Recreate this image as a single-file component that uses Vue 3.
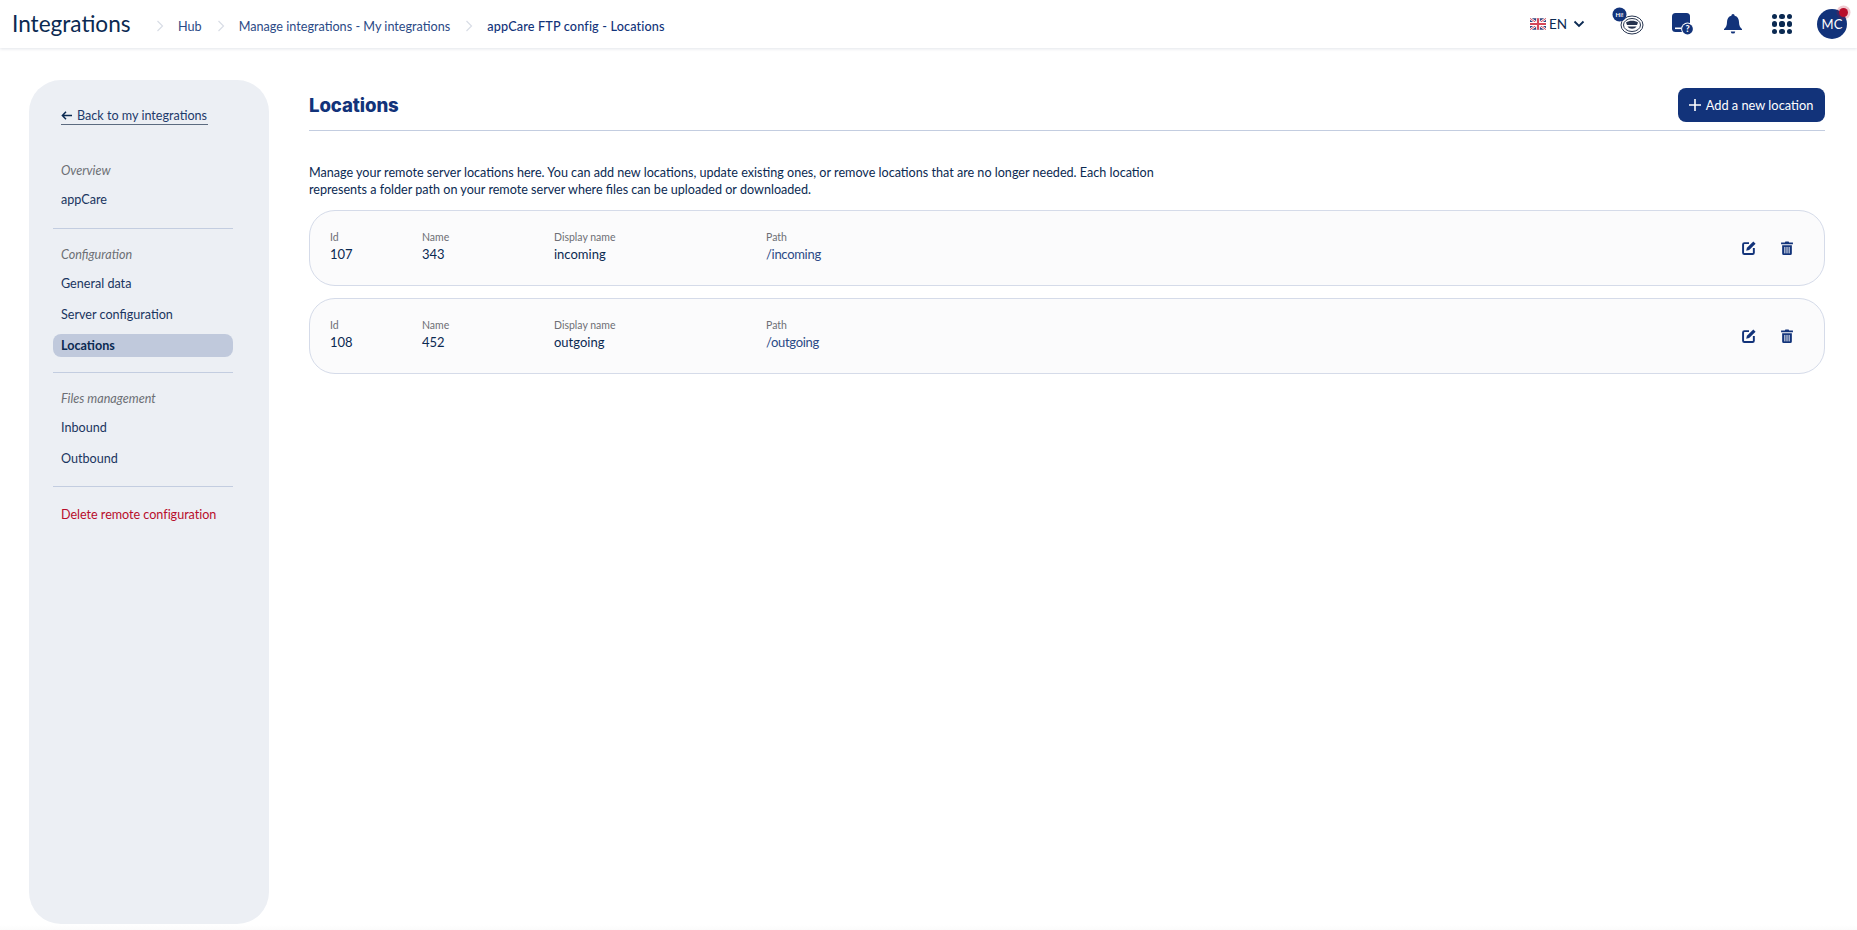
<script setup>
const crumbs = ['Hub', 'Manage integrations - My integrations', 'appCare FTP config - Locations']
const rows = [
  { id: 107, name: 343, display: 'incoming', path: '/incoming' },
  { id: 108, name: 452, display: 'outgoing', path: '/outgoing' }
]
</script>

<template>
  <div class="app">
    <header class="topbar">
      <div class="brand">Integrations</div>
      <nav class="crumbs">
        <template v-for="(c, i) in crumbs" :key="c">
          <svg class="sep" width="8" height="12" viewBox="0 0 8 12"><path d="M1.5 1l5 5-5 5" fill="none" stroke="#d9dde6" stroke-width="1.2"/></svg>
          <span class="crumb" :class="{ last: i === crumbs.length - 1 }">{{ c }}</span>
        </template>
      </nav>
      <div class="tools">
        <div class="lang">
          <svg width="16" height="12" viewBox="0 0 17 12" class="flag">
            <rect width="17" height="12" rx="2" fill="#33467f"/>
            <path d="M0 0l17 12M17 0L0 12" stroke="#fff" stroke-width="2.6"/>
            <path d="M0 0l17 12M17 0L0 12" stroke="#d4475a" stroke-width="1"/>
            <path d="M8.5 0v12M0 6h17" stroke="#fff" stroke-width="4"/>
            <path d="M8.5 0v12M0 6h17" stroke="#d4475a" stroke-width="2.2"/>
          </svg>
          <span>EN</span>
          <svg class="chev" width="12" height="8" viewBox="0 0 12 8"><path d="M1.5 1.5L6 6l4.5-4.5" fill="none" stroke="#0b2a52" stroke-width="1.8"/></svg>
        </div>
        <svg class="hi" width="32" height="28" viewBox="0 0 32 28">
          <ellipse cx="20" cy="18" rx="11" ry="9" fill="#fff" stroke="#26344f" stroke-width="1"/>
          <ellipse cx="20" cy="18" rx="8.5" ry="6.5" fill="none" stroke="#26344f" stroke-width="1"/>
          <path d="M14 15.5c3-2.5 9-2.5 12 0l-1 2.5H15z" fill="#26344f"/>
          <path d="M15.5 19.5c2 3 7 3 9 0z" fill="#26344f"/>
          <circle cx="7.5" cy="7.5" r="7" fill="#12337a"/>
          <text x="7.5" y="9.6" text-anchor="middle" class="hi-text">Hi!</text>
        </svg>
        <svg class="help" width="22" height="22" viewBox="0 0 22 22">
          <rect x="0" y="0" width="18" height="19" rx="3.5" fill="#12337a"/>
          <rect x="3" y="14.5" width="6" height="1.6" fill="#fff"/>
          <circle cx="15.5" cy="16" r="6.4" fill="#fff"/>
          <circle cx="15.5" cy="16" r="5.4" fill="#12337a"/>
          <text x="15.5" y="19.2" text-anchor="middle" class="q-text">?</text>
        </svg>
        <svg class="bell" width="18" height="20" viewBox="0 0 18 20">
          <path d="M9 0a1.6 1.6 0 0 1 1.6 1.7C13.6 2.4 15 5 15 8c0 3.6 1 5.3 3 7v1H0v-1c2-1.7 3-3.4 3-7 0-3 1.4-5.6 4.4-6.3A1.6 1.6 0 0 1 9 0z" fill="#12337a"/>
          <path d="M6.8 17.4h4.4a2.2 2.2 0 0 1-4.4 0z" fill="#12337a"/>
        </svg>
        <div class="grid-icon"><i v-for="n in 9" :key="n"></i></div>
        <div class="avatar">MC<span class="dot"></span></div>
      </div>
    </header>

    <div class="body">
      <aside class="side">
        <a class="back">
          <svg class="arrow" width="11" height="9" viewBox="0 0 11 9"><path d="M5 .8L1.4 4.5 5 8.2M1.4 4.5H11" fill="none" stroke="#0b2a52" stroke-width="1.5"/></svg>
          Back to my integrations
        </a>
        <div class="group first">
          <div class="title">Overview</div>
          <div class="item one">appCare</div>
        </div>
        <hr />
        <div class="group">
          <div class="title">Configuration</div>
          <div class="item">General data</div>
          <div class="item">Server configuration</div>
          <div class="item active">Locations</div>
        </div>
        <hr />
        <div class="group">
          <div class="title">Files management</div>
          <div class="item">Inbound</div>
          <div class="item">Outbound</div>
        </div>
        <hr />
        <div class="item danger">Delete remote configuration</div>
      </aside>

      <main class="main">
        <div class="head">
          <h1>Locations</h1>
          <button class="add">
            <svg width="12" height="12" viewBox="0 0 12 12"><path d="M6 0v12M0 6h12" stroke="#fff" stroke-width="1.6"/></svg>
            Add a new location
          </button>
        </div>
        <p class="intro">Manage your remote server locations here. You can add new locations, update existing ones, or remove locations that are no longer needed. Each location represents a folder path on your remote server where files can be uploaded or downloaded.</p>
        <div class="list">
          <div v-for="r in rows" :key="r.id" class="card">
            <div class="col c1"><label>Id</label><b>{{ r.id }}</b></div>
            <div class="col c2"><label>Name</label><b>{{ r.name }}</b></div>
            <div class="col c3"><label>Display name</label><b>{{ r.display }}</b></div>
            <div class="col c4"><label>Path</label><b class="path">{{ r.path }}</b></div>
            <div class="actions">
              <svg width="14" height="14" viewBox="0 0 13 13">
                <path d="M6.5 2H2.2A1.2 1.2 0 0 0 1 3.2v7.6A1.2 1.2 0 0 0 2.2 12h7.6a1.2 1.2 0 0 0 1.2-1.2V6.5" fill="none" stroke="#12337a" stroke-width="1.8"/>
                <path d="M10.5.4l2.1 2.1L6.7 8.4l-2.8.7.7-2.8z" fill="#12337a"/>
              </svg>
              <svg width="12" height="14" viewBox="0 0 11 13">
                <path d="M0 1.5h3.5L4 .4h3l.5 1.1H11V3H0z" fill="#12337a"/>
                <path d="M1 4h9v7.6A1.4 1.4 0 0 1 8.6 13H2.4A1.4 1.4 0 0 1 1 11.6z" fill="#12337a"/>
                <path d="M3.5 5.5v6M5.5 5.5v6M7.5 5.5v6" stroke="#fbfbfc" stroke-width=".9"/>
              </svg>
            </div>
          </div>
        </div>
      </main>
    </div>
  </div>
</template>

<style>
html, body { margin: 0; background: #fff; }
</style>

<style scoped>
.app {
  height: 930px;
  overflow: hidden;
  font-family: "Lato", "Noto Sans", sans-serif;
  color: #0b2a52;
  background: linear-gradient(#fff 925px, #fbfbfb 930px);
}
.topbar {
  height: 48px;
  display: flex;
  align-items: center;
  padding: 0 10px 0 12px;
  background: #fff;
  box-shadow: 0 1px 3px rgba(20, 40, 80, .12);
}
.brand { font-size: 22.6px; line-height: 48px; width: 144px; }
.crumbs { display: flex; align-items: center; font-size: 12.65px; color: #2b4a86; padding-top: 4px; }
.sep { margin-right: 14px; }
.crumb { margin-right: 15px; }
.crumb.last { color: #12337a; font-weight: 500; letter-spacing: .15px; }
.tools { margin-left: auto; display: flex; align-items: center; }
.lang { box-sizing: border-box; display: flex; align-items: center; font-size: 13.5px; width: 73px; padding-left: 3px; }
.flag { margin-right: 3px; }
.chev { margin-left: 6px; }
.hi { margin: -6px 0 0 12px; }
.hi-text { font-size: 6px; font-weight: 700; fill: #fff; font-family: "Lato", sans-serif; }
.q-text { font-size: 9px; font-weight: 900; fill: #fff; font-family: "Lato", sans-serif; }
.help { margin: 0 0 0 28px; }
.bell { margin-left: 30px; }
.grid-icon {
  margin-left: 30px;
  display: grid;
  grid-template-columns: repeat(3, 5.2px);
  gap: 2.2px;
}
.grid-icon i { width: 5.2px; height: 5.2px; border-radius: 50%; background: #0b2a52; }
.avatar {
  position: relative;
  margin-left: 25px;
  width: 30px;
  height: 30px;
  border-radius: 50%;
  background: #12337a;
  color: #fff;
  font-size: 13px;
  display: flex;
  align-items: center;
  justify-content: center;
}
.dot {
  position: absolute;
  top: -1px;
  right: -1px;
  width: 9px;
  height: 9px;
  border-radius: 50%;
  background: #b80d2b;
  box-shadow: 0 0 0 2.5px rgba(184, 13, 43, .22);
}
.body { display: flex; padding: 32px 32px 0 29px; gap: 40px; }
.side {
  box-sizing: border-box;
  width: 240px;
  height: 844px;
  flex: none;
  background: #eceff4;
  border-radius: 32px;
  padding: 27px 36px 0 24px;
  font-size: 12.6px;
  line-height: 18px;
}
.back {
  display: inline-flex;
  align-items: center;
  gap: 5px;
  margin-left: 8px;
  line-height: 17px;
  width: 147px;
  box-sizing: border-box;
  border-bottom: 1px solid #5c6b80;
  white-space: nowrap;
  color: #1d3a6b;
}
.group { display: flex; flex-direction: column; }
.group.first { margin-top: 36px; }
.title { padding-left: 8px; font-style: italic; color: #6d6f75; height: 18px; line-height: 20px; margin-bottom: 9px; }
.item { padding-left: 8px; height: 23px; line-height: 23px; margin-top: 8px; color: #1a3560; white-space: nowrap; }
.group .title + .item { margin-top: 0; }
.item.one { margin-bottom: 1px; }
.item.active { background: #c0c9dc; border-radius: 8px; font-weight: 700; color: #0b2a52; margin-bottom: -1px; }
.item.danger { color: #b80d2b; margin-top: 16px; letter-spacing: -.03px; }
hr { border: 0; border-top: 1px solid #c3cde0; margin: 16px 0 16px; }
.main { flex: 1; min-width: 0; }
.head {
  display: flex;
  justify-content: space-between;
  align-items: center;
  padding: 8px 0;
  height: 34px;
  border-bottom: 1px solid #c3cde0;
}
h1 {
  margin: 0;
  font-family: "Inter", "Lato", sans-serif;
  font-size: 18.6px;
  font-weight: 800;
  color: #12337a;
  letter-spacing: -.1px;
}
.add {
  width: 147px;
  height: 34px;
  border: 0;
  border-radius: 8px;
  background: #12337a;
  color: #fff;
  font: 400 12.8px "Lato", sans-serif;
  display: flex;
  align-items: center;
  justify-content: center;
  gap: 5px;
  padding: 0 1px 0 0;
  white-space: nowrap;
}
.intro { margin: 33px 0 12px; max-width: 860px; font-size: 12.6px; line-height: 17px; color: #0b2a52; }
.list { display: flex; flex-direction: column; gap: 12px; }
.card {
  box-sizing: border-box;
  height: 76px;
  border: 1px solid #d5dbe9;
  border-radius: 26px;
  background: #fbfbfc;
  display: flex;
  align-items: center;
  padding: 0 31px 3px 20px;
}
.col { display: flex; flex-direction: column; }
.col label { font-size: 10.5px; line-height: 15px; color: #6e6f75; }
.col b { font-weight: 400; font-size: 13px; line-height: 18px; color: #0b2a52; }
.col b.path { color: #2b4a86; letter-spacing: -.3px; }
.c1 { width: 92px; }
.c2 { width: 132px; }
.c3 { width: 212px; }
.actions { margin-left: auto; display: flex; align-items: center; gap: 25px; padding-top: 3px; }
</style>
